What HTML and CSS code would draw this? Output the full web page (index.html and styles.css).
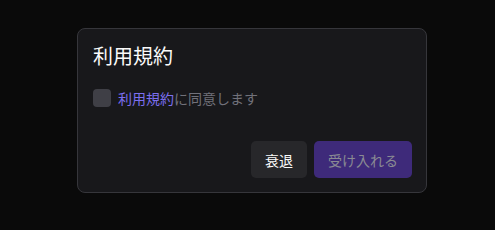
FILE: index.html
```html
<!DOCTYPE html>
<html lang="ja">
  <head>
    <meta charset="UTF-8" />
    <title>利用規約</title>
    <link rel="stylesheet" href="styles.css">
  </head>
  <body>
    <div class="dialog">
      <div class="title">利用規約</div>
      <label class="agree">
        <span class="box"></span>
        <span class="agree-text"><span class="link">利用規約</span>に同意します</span>
      </label>
      <div class="actions">
        <button class="btn decline">衰退</button>
        <button class="btn accept">受け入れる</button>
      </div>
    </div>
  </body>
</html>
```

FILE: styles.css
```css
* {
  box-sizing: border-box;
}
body {
  margin: 0;
  background: #0a0a0a;
  font-family: "Noto Sans CJK JP", "Noto Sans", sans-serif;
  padding: 28px 0 0 77px;
}
.dialog {
  width: 350px;
  height: 165px;
  background: #18181b;
  border: 1px solid #36363b;
  border-radius: 8px;
  padding: 11px 14px 14px 15px;
  display: flex;
  flex-direction: column;
}
.title {
  color: #fafafa;
  font-size: 20px;
  line-height: 32px;
}
.agree {
  display: flex;
  align-items: center;
  gap: 7px;
  margin-top: 16px;
  font-size: 14px;
  line-height: 20px;
}
.box {
  width: 18px;
  height: 18px;
  border-radius: 4px;
  background: #3f3f46;
}
.agree-text {
  color: #71717a;
}
.link {
  color: #7c6ff0;
}
.actions {
  margin-top: auto;
  display: flex;
  justify-content: flex-end;
  gap: 7px;
}
.btn {
  height: 37px;
  border: none;
  border-radius: 5px;
  font-family: inherit;
  font-size: 14px;
  padding: 0 12px;
}
.decline {
  background: #27272a;
  color: #fafafa;
  width: 56px;
}
.accept {
  background: #3e2a7a;
  color: #8a8a93;
  width: 98px;
}
```
